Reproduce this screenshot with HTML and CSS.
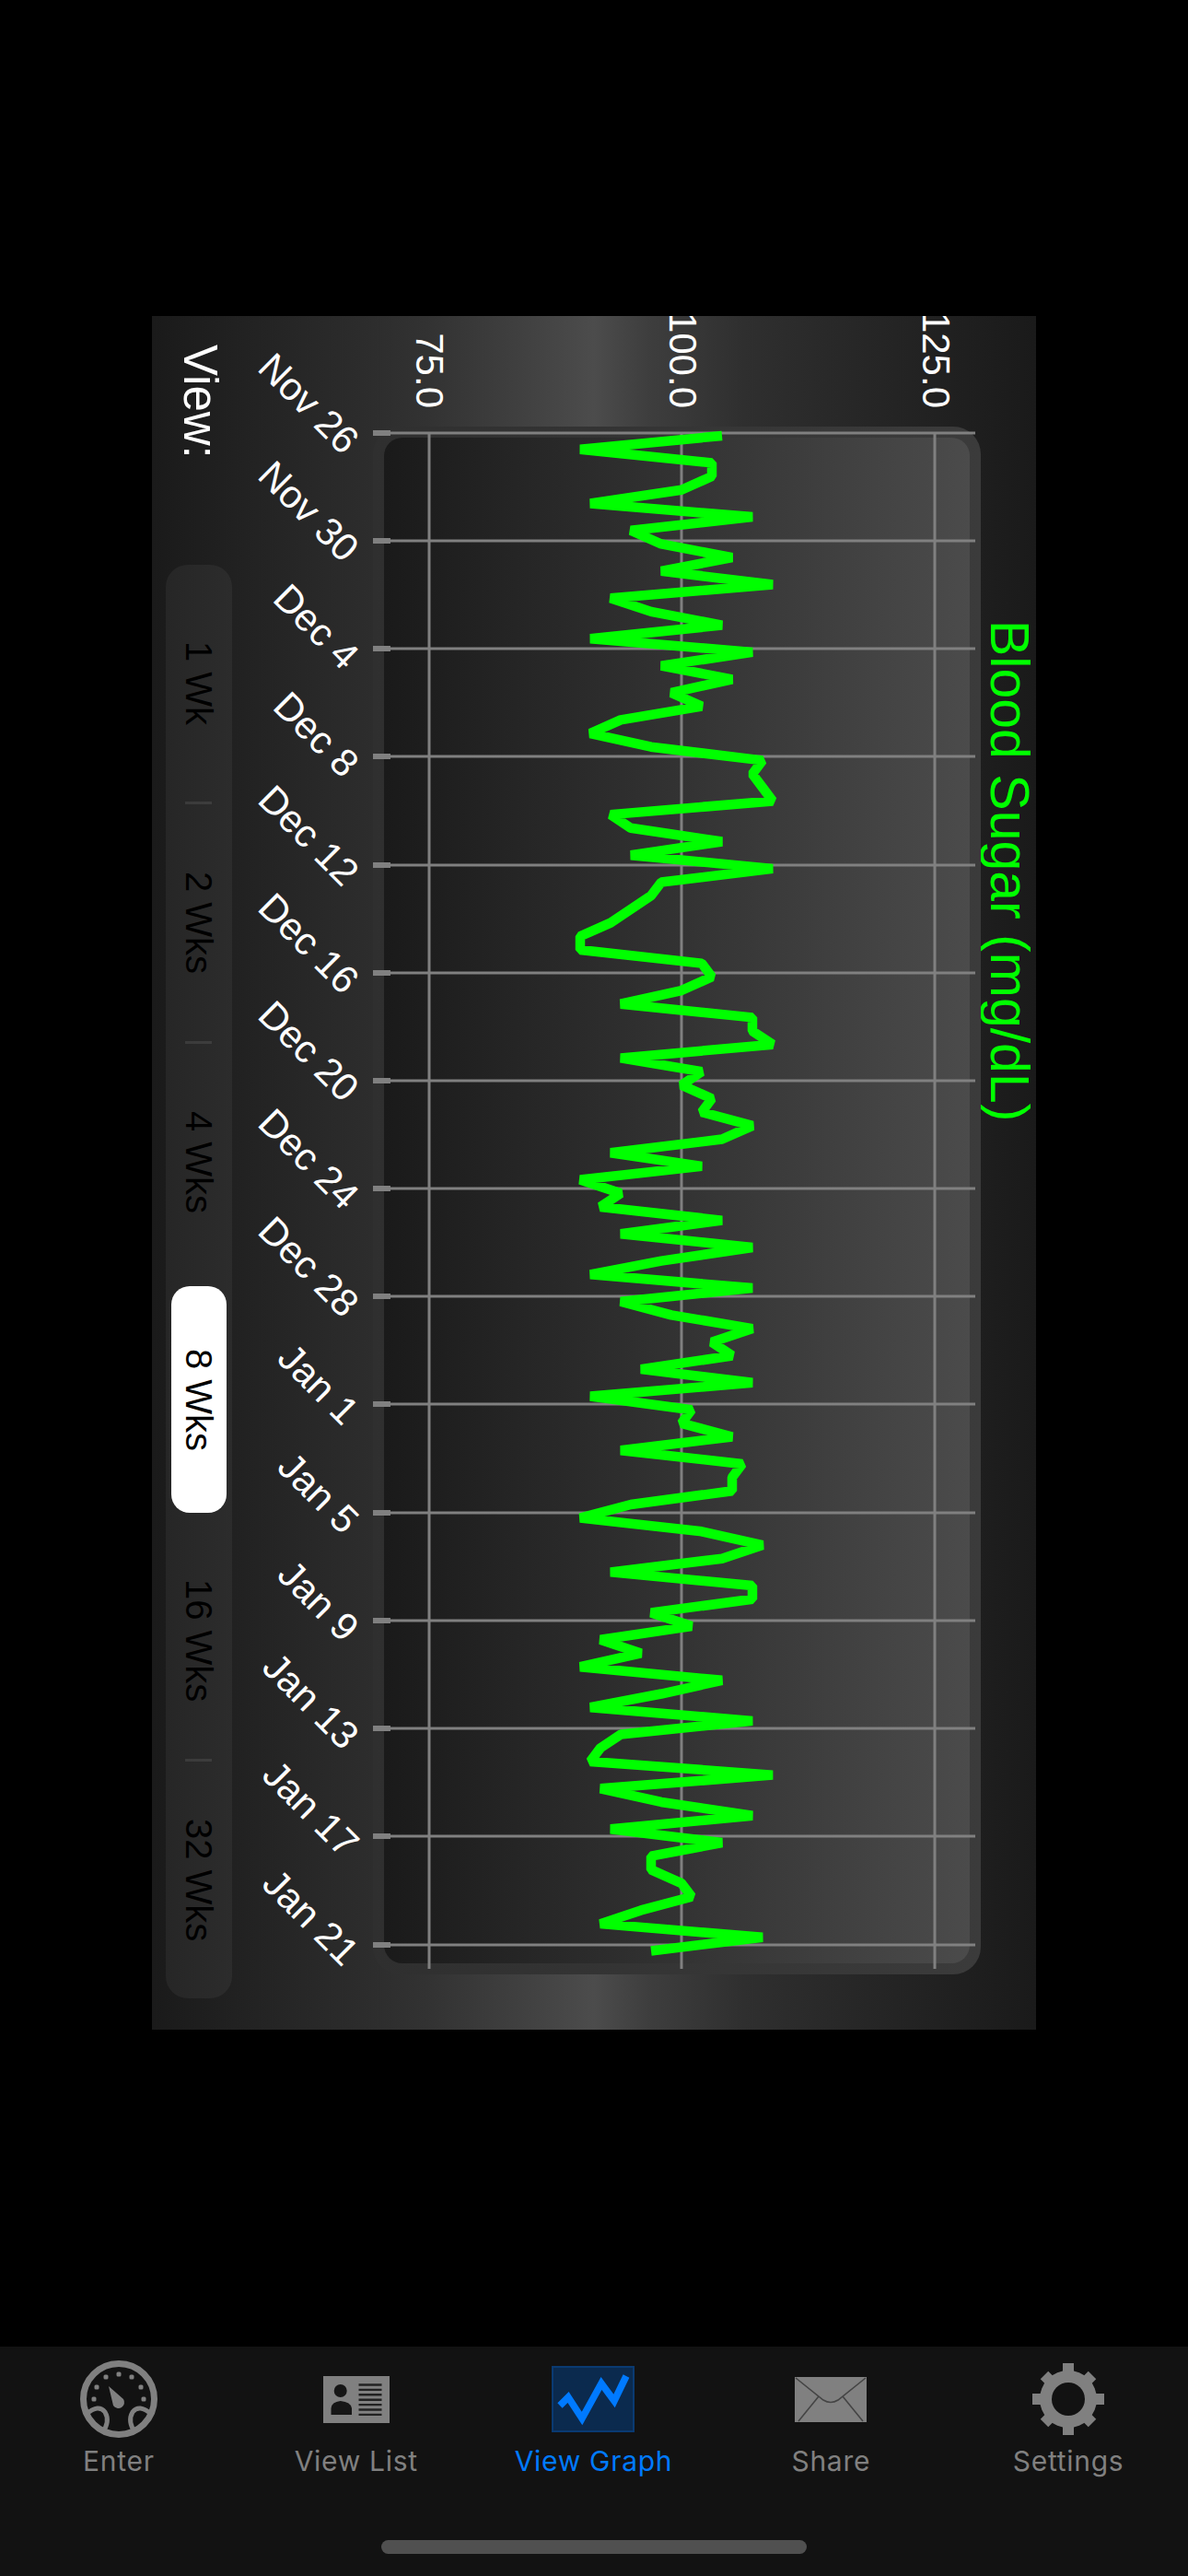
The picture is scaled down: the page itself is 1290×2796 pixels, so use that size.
FILE: index.html
```html
<!DOCTYPE html>
<html lang="en">
<head>
<meta charset="utf-8">
<title>Blood Sugar Graph</title>
<link rel="stylesheet" href="styles.css">
</head>
<body>
<main class="stage">
  <section class="panel">
    <div class="side">
      <div class="view-label">View:</div>
      <div class="seg">
        <div class="seg-item"><span>1 Wk</span></div>
        <i class="seg-div"></i>
        <div class="seg-item"><span>2 Wks</span></div>
        <i class="seg-div"></i>
        <div class="seg-item"><span>4 Wks</span></div>
        <i class="seg-div seg-div--off"></i>
        <div class="seg-item seg-item--on"><span>8 Wks</span></div>
        <i class="seg-div seg-div--off"></i>
        <div class="seg-item"><span>16 Wks</span></div>
        <i class="seg-div"></i>
        <div class="seg-item"><span>32 Wks</span></div>
      </div>
    </div>
    <div class="frame">
      <div class="plot"></div>
      <svg class="chart" width="660" height="1680" viewBox="405 463 660 1680" aria-label="Blood sugar chart">
        <g class="grid">
          <line x1="466" y1="470" x2="466" y2="2137"/>
          <line x1="740" y1="470" x2="740" y2="2137"/>
          <line x1="1015" y1="470" x2="1015" y2="2137"/>
          <line x1="405" y1="470" x2="1059" y2="470"/>
          <line x1="405" y1="587" x2="1059" y2="587"/>
          <line x1="405" y1="704" x2="1059" y2="704"/>
          <line x1="405" y1="821" x2="1059" y2="821"/>
          <line x1="405" y1="939" x2="1059" y2="939"/>
          <line x1="405" y1="1056" x2="1059" y2="1056"/>
          <line x1="405" y1="1173" x2="1059" y2="1173"/>
          <line x1="405" y1="1290" x2="1059" y2="1290"/>
          <line x1="405" y1="1407" x2="1059" y2="1407"/>
          <line x1="405" y1="1524" x2="1059" y2="1524"/>
          <line x1="405" y1="1642" x2="1059" y2="1642"/>
          <line x1="405" y1="1759" x2="1059" y2="1759"/>
          <line x1="405" y1="1876" x2="1059" y2="1876"/>
          <line x1="405" y1="1993" x2="1059" y2="1993"/>
          <line x1="405" y1="2111" x2="1059" y2="2111"/>
        </g>
        <g class="ticks">
          <rect x="405" y="467" width="19" height="6"/>
          <rect x="405" y="584" width="19" height="6"/>
          <rect x="405" y="701" width="19" height="6"/>
          <rect x="405" y="818" width="19" height="6"/>
          <rect x="405" y="936" width="19" height="6"/>
          <rect x="405" y="1053" width="19" height="6"/>
          <rect x="405" y="1170" width="19" height="6"/>
          <rect x="405" y="1287" width="19" height="6"/>
          <rect x="405" y="1404" width="19" height="6"/>
          <rect x="405" y="1521" width="19" height="6"/>
          <rect x="405" y="1639" width="19" height="6"/>
          <rect x="405" y="1756" width="19" height="6"/>
          <rect x="405" y="1873" width="19" height="6"/>
          <rect x="405" y="1990" width="19" height="6"/>
          <rect x="405" y="2108" width="19" height="6"/>
        </g>
        <polyline class="trace" transform="matrix(11 0 0 14.683 -360 473)" points="104,0 90,1 103,2 103,3 100,4 91,5 107,6 95,7 98,8 105,9 98,10 109,11 93,12 97,13 104,14 91,15 107,16 98,17 105,18 99,19 102,20 94,21 91,22 97,23 108,24 107,25 108,26 109,27 93,28 95,29 104,30 95,31 109,32 98,33 97,34 95,35 93,36 90,37 90,38 102,39 103,40 100,41 94,42 107,43 107,44 109,45 94,46 102,47 100,48 103,49 102,50 107,51 104,52 93,53 102,54 90,55 94,56 92,57 104,58 94,59 107,60 98,61 91,62 107,63 94,64 99,65 107,66 103,67 105,68 96,69 107,70 91,71 101,72 100,73 105,74 94,75 106,76 105,77 105,78 95,79 90,80 102,81 108,82 104,83 93,84 107,85 107,86 97,87 101,88 92,89 96,90 90,91 104,92 98,93 91,94 107,95 94,96 92,97 91,98 109,99 92,100 98,101 107,102 93,103 104,104 97,105 97,106 100,107 101,108 96,109 92,110 108,111 97,112"/>
        <g class="y-labels">
          <text transform="translate(452 443) rotate(90)">75.0</text>
          <text transform="translate(727 443) rotate(90)">100.0</text>
          <text transform="translate(1002 443) rotate(90)">125.0</text>
        </g>
        <g class="x-labels">
          <text transform="translate(372 495) rotate(45)">Nov 26</text>
          <text transform="translate(372 612) rotate(45)">Nov 30</text>
          <text transform="translate(372 729) rotate(45)">Dec 4</text>
          <text transform="translate(372 846) rotate(45)">Dec 8</text>
          <text transform="translate(372 964) rotate(45)">Dec 12</text>
          <text transform="translate(372 1081) rotate(45)">Dec 16</text>
          <text transform="translate(372 1198) rotate(45)">Dec 20</text>
          <text transform="translate(372 1315) rotate(45)">Dec 24</text>
          <text transform="translate(372 1432) rotate(45)">Dec 28</text>
          <text transform="translate(372 1549) rotate(45)">Jan 1</text>
          <text transform="translate(372 1667) rotate(45)">Jan 5</text>
          <text transform="translate(372 1784) rotate(45)">Jan 9</text>
          <text transform="translate(372 1901) rotate(45)">Jan 13</text>
          <text transform="translate(372 2018) rotate(45)">Jan 17</text>
          <text transform="translate(372 2136) rotate(45)">Jan 21</text>
        </g>
      </svg>
    </div>
    <div class="axis-title">Blood Sugar (mg/dL)</div>
  </section>
</main>

<nav class="tabbar">
  <div class="tabs">
    <div class="tab">
      <div class="tab-icon">
        <svg width="84" height="84" viewBox="0 0 84 84">
          <circle class="ic-line" cx="42" cy="42" r="38.5" stroke-width="7"/>
          <path class="ic-line" stroke-width="5" d="M7 58Q20 47 27 56Q33 66 24 79"/>
          <path class="ic-line" stroke-width="5" d="M77 58Q64 47 57 56Q51 66 60 79"/>
          <g class="ic-fill">
            <rect x="39.5" y="12.5" width="5" height="5" rx="1.5"/>
            <rect x="25.5" y="15.5" width="5" height="5" rx="1.5"/>
            <rect x="53.5" y="15.5" width="5" height="5" rx="1.5"/>
            <rect x="15.5" y="26.5" width="5" height="5" rx="1.5"/>
            <rect x="63.5" y="26.5" width="5" height="5" rx="1.5"/>
            <rect x="12.5" y="39.5" width="5" height="5" rx="1.5"/>
            <rect x="66.5" y="39.5" width="5" height="5" rx="1.5"/>
            <path d="M31 28L47 42A6.5 6.5 0 1 1 36 49Z"/>
          </g>
        </svg>
      </div>
      <div class="tab-label">Enter</div>
    </div>
    <div class="tab">
      <div class="tab-icon">
        <svg width="72" height="51" viewBox="0 0 72 51">
          <rect class="ic-fill" width="72" height="51"/>
          <ellipse class="ic-dark" cx="18.7" cy="16" rx="7" ry="7"/>
          <path class="ic-dark" d="M8.5 42V35Q9 28 18.7 27Q30 28 31 35V42Z"/>
          <path class="ic-rule" d="M38.5 9.5H63.5M38.5 14.9H63.5M38.5 20.3H63.5M38.5 25.7H63.5M38.5 31.1H63.5M38.5 36.5H63.5M38.5 41.9H63.5"/>
        </svg>
      </div>
      <div class="tab-label">View List</div>
    </div>
    <div class="tab tab--on">
      <div class="tab-icon">
        <svg width="90" height="72" viewBox="0 0 90 72">
          <rect class="ic-graph-bg" x="1" y="1" width="88" height="70"/>
          <polyline class="ic-graph-line" points="9,43 18,34 33,57 54,19 68,38 81,11"/>
        </svg>
      </div>
      <div class="tab-label">View Graph</div>
    </div>
    <div class="tab">
      <div class="tab-icon">
        <svg width="78" height="49" viewBox="0 0 78 49">
          <rect class="ic-fill" width="78" height="49"/>
          <path class="ic-crease" d="M1 1L31 25Q39 30 47 25L77 1M4 48L26 21M74 48L52 21"/>
        </svg>
      </div>
      <div class="tab-label">Share</div>
    </div>
    <div class="tab">
      <div class="tab-icon">
        <svg width="78" height="78" viewBox="-39 -39 78 78">
          <g class="ic-teeth">
            <line x1="0" y1="-39" x2="0" y2="39"/>
            <line x1="-39" y1="0" x2="39" y2="0"/>
            <line x1="-26" y1="-26" x2="26" y2="26"/>
            <line x1="-26" y1="26" x2="26" y2="-26"/>
          </g>
          <circle class="ic-fill" r="31"/>
          <circle class="ic-hole" r="18"/>
        </svg>
      </div>
      <div class="tab-label">Settings</div>
    </div>
  </div>
  <div class="home-indicator"></div>
</nav>
</body>
</html>
```

FILE: styles.css
```css
* { box-sizing: border-box; }

html, body {
  margin: 0;
  padding: 0;
  background: #000;
}

body {
  width: 1290px;
  height: 2796px;
  display: flex;
  flex-direction: column;
  font-family: "Liberation Sans", Arial, sans-serif;
}

.stage {
  flex: 1;
  padding: 343px 0 0 165px;
}

.panel {
  width: 960px;
  height: 1860px;
  display: grid;
  grid-template-columns: 240px 660px 60px;
  overflow: hidden;
  background: linear-gradient(90deg, #1a1a1a 0%, #2d2d2d 25%, #323232 31%, #3f3f3f 41%, #4c4c4c 50%, #3e3e3e 56%, #2f2f2f 67%, #262626 81%, #1a1a1a 100%);
}

.side {
  padding: 31px 0 0 15px;
}

.view-label {
  height: 239px;
  padding-left: 12px;
  writing-mode: vertical-rl;
  font-size: 51px;
  line-height: 51px;
  color: #fff;
}

.seg {
  width: 72px;
  height: 1556px;
  display: flex;
  flex-direction: column;
  align-items: stretch;
  border-radius: 24px;
  background: rgba(255, 255, 255, 0.05);
}

.seg-item {
  flex: 1;
  display: flex;
  align-items: center;
  justify-content: center;
  writing-mode: vertical-rl;
  font-size: 40px;
  line-height: 40px;
  color: #000;
}

.seg-item--on span {
  width: 60px;
  height: 246px;
  margin-top: -3px;
  display: flex;
  align-items: center;
  justify-content: center;
  border-radius: 20px;
  background: #fff;
}

.seg-div {
  display: block;
  flex: none;
  width: 29px;
  height: 3px;
  margin-left: 21px;
  background: rgba(255, 255, 255, 0.09);
}

.seg-div--off { background: transparent; }

.frame {
  position: relative;
  height: 1680px;
  margin-top: 120px;
  padding: 12px;
  border-radius: 30px;
  background: linear-gradient(90deg, #2f2f2f 0%, #3b3b3b 100%);
}

.plot {
  height: 100%;
  border-radius: 20px;
  background: linear-gradient(90deg, #1a1a1a 0%, #4b4b4b 100%);
}

.chart {
  position: absolute;
  left: 0;
  top: 0;
  overflow: visible;
}

.grid line {
  stroke: #808080;
  stroke-width: 3;
}

.ticks rect { fill: #808080; }

.trace {
  fill: none;
  stroke: #00ff00;
  stroke-width: 10.5;
  stroke-linejoin: bevel;
  vector-effect: non-scaling-stroke;
}

.y-labels text {
  fill: #fff;
  font-size: 42px;
  text-anchor: end;
}

.x-labels text {
  fill: #fff;
  font-size: 42px;
  text-anchor: end;
}

.axis-title {
  padding: 330px 4px 0 0;
  writing-mode: vertical-rl;
  font-size: 59px;
  line-height: 50px;
  white-space: nowrap;
  color: #00ff00;
}

.tabbar {
  height: 249px;
  display: flex;
  flex-direction: column;
  background: #121212;
}

.tabs {
  display: flex;
  padding: 12px 1px 0 0;
}

.tab {
  flex: 1;
  display: flex;
  flex-direction: column;
  align-items: center;
  color: #808080;
}

.tab--on { color: #007aff; }

.tab-icon {
  height: 90px;
  display: flex;
  align-items: center;
  justify-content: center;
}

.tab-icon svg { display: block; }

.tab-label {
  margin-top: 4px;
  font-family: Inter, "Liberation Sans", sans-serif;
  font-size: 30px;
  line-height: 36px;
  letter-spacing: 0.7px;
}

.ic-line { fill: none; stroke: #808080; }
.ic-fill { fill: #808080; }
.ic-dark { fill: #161616; }
.ic-rule { fill: none; stroke: #222; stroke-width: 2.4; }
.ic-crease { fill: none; stroke: #444; stroke-width: 1.6; }
.ic-teeth line { stroke: #808080; stroke-width: 12; }
.ic-hole { fill: #121212; }

.ic-graph-bg {
  fill: #0b2a4e;
  stroke: #0a3a72;
  stroke-width: 2;
}

.ic-graph-line {
  fill: none;
  stroke: #007aff;
  stroke-width: 7.5;
  stroke-linejoin: miter;
}

.home-indicator {
  width: 462px;
  height: 15px;
  margin: auto auto 24px;
  border-radius: 8px;
  background: #505050;
}
```
